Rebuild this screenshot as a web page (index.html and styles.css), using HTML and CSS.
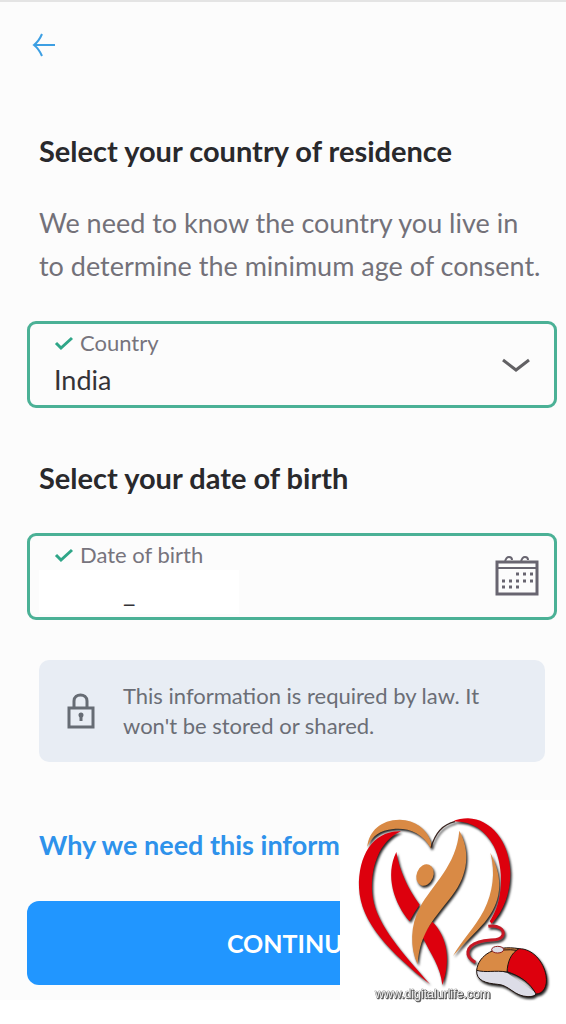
FILE: index.html
```html
<!DOCTYPE html>
<html lang="en">
<head>
    <meta charset="UTF-8">
    <meta name="viewport" content="width=device-width, initial-scale=1.0">
    <title>Country and date of birth</title>
    <link rel="stylesheet" href="styles.css">
</head>
<body>
    <div class="page">
        <button type="button" class="back" aria-label="Back">
            <svg width="24" height="28" viewBox="0 0 24 28" fill="none" stroke="#3d9fe3" stroke-width="2">
                <path d="M23 15H2M10 4Q7 11 2 15Q7 19 10 26"/>
            </svg>
        </button>

        <form id="consentForm">
            <h2>Select your country of residence</h2>
            <p class="intro">We need to know the country you live in to determine the minimum age of consent.</p>

            <div class="field">
                <div class="field-main">
                    <label for="country">
                        <svg class="check" width="20" height="16" viewBox="0 0 20 16"><path d="M2 8L7 13L18 3"/></svg>
                        Country
                    </label>
                    <select id="country" name="country">
                        <option>India</option>
                    </select>
                </div>
                <svg class="chevron" width="30" height="16" viewBox="0 0 30 16" fill="none" stroke="#626164" stroke-width="3">
                    <path d="M2 3L15 13L28 3"/>
                </svg>
            </div>

            <h2>Select your date of birth</h2>

            <div class="field">
                <div class="field-main">
                    <label for="birth">
                        <svg class="check" width="20" height="16" viewBox="0 0 20 16"><path d="M2 8L7 13L18 3"/></svg>
                        Date of birth
                    </label>
                    <input type="text" id="birth" name="birth" class="birth" value="_">
                </div>
                <svg class="calendar" width="44" height="42" viewBox="0 0 44 42" fill="none" stroke="#686570">
                    <path stroke-width="3" d="M2 6H42V38H2Z"/>
                    <path stroke-width="2" d="M2 12H42M10 6Q11 1 14 1Q17 1 17 4M26 6Q27 1 30 1Q33 1 33 4"/>
                    <path stroke-width="3" stroke-dasharray="3 4" d="M21 18H38M7 25H38M7 31H24"/>
                </svg>
            </div>

            <div class="notice">
                <svg class="lock" width="28" height="36" viewBox="0 0 28 36" fill="none" stroke="#666c74" stroke-width="3">
                    <path d="M2 15H26V34H2ZM7 15V8C7 0 20 0 20 8V15M14 21V28"/>
                    <circle cx="14" cy="22" r="1"/>
                </svg>
                <p>This information is required by law. It won't be stored or shared.</p>
            </div>

            <a href="#" class="why">Why we need this information</a>

            <button type="submit" class="continue">CONTINUE</button>
        </form>

        <!-- site logo, sits over the bottom corner -->
        <svg class="logo" viewBox="0 15 678 672" role="img" aria-label="digitalurlife">
            <rect y="15" width="678" height="672" fill="#fff"/>
            <g class="logo-shapes">
                <path fill="#d98a45" d="M82 155C86 108 125 73 180 74C225 76 260 100 273 141L273 161C246 112 205 98 160 102C120 106 97 122 82 155Z"/>
                <path fill="#dd000d" d="M336 80C352 73 368 70 384 70C453 72 508 140 511 231C512 294 490 350 455 386L449 379C490 320 494 220 461 153C432 99 386 75 336 80Z"/>
                <path fill="none" stroke="#3a2622" stroke-width="4" d="M273 158C286 112 308 88 345 80"/>
                <path fill="#dd000d" d="M183 109C101 105 54 181 57 278C62 382 145 466 270 568C191 478 111 392 98 307C87 219 119 136 183 109Z"/>
                <path fill="#dd000d" d="M169 171C178 225 201 277 239 329C228 345 218 361 209 379C163 326 134 242 169 171Z"/>
                <path fill="#dd000d" d="M277 380C324 427 332 500 307 570C301 513 273 480 248 427C256 411 265 395 277 380Z"/>
                <path fill="#d98a45" d="M358 107C391 167 386 238 336 302C287 367 239 409 233 508C209 459 211 389 239 338C276 270 350 211 358 107Z"/>
                <ellipse cx="255" cy="240" rx="25" ry="33" transform="rotate(22 255 240)" fill="#d98a45"/>
                <path fill="#d98a45" d="M451 173C494 255 483 322 435 381C405 415 369 448 339 483C365 437 405 398 432 346C459 292 467 231 451 173Z"/>
                <path fill="none" stroke="#c71724" stroke-width="9" d="M445 394C475 389 493 404 489 419C482 440 452 431 417 441C375 454 374 485 406 502"/>
                <path fill="#dddde7" d="M409 525C408 557 438 565 473 568C508 570 522 604 564 605C577 605 586 601 590 595L501 533L438 518Z"/>
                <path fill="#dd000d" d="M537 461C579 461 611 501 618 541C624 575 609 597 588 597C570 563 538 541 502 529C503 500 511 473 537 461Z"/>
                <path fill="#d98a45" d="M410 526C415 480 466 449 537 461C512 475 503 500 501 531C466 525 437 534 410 526Z"/>
                <path fill="none" stroke="#21140f" stroke-width="3" d="M410 526C415 480 466 449 537 461C579 461 611 501 618 541C624 575 609 597 588 597C570 563 538 541 501 531C466 525 437 534 410 526C408 557 438 565 473 568C508 570 522 604 564 605C577 605 584 603 588 597M501 531C503 500 512 475 537 461M488 465Q515 463 530 466"/>
                <ellipse cx="473" cy="464" rx="18" ry="10" fill="#dddde7" stroke="#8d1d1d" stroke-width="3"/>
            </g>
            <text class="logo-text" x="105" y="610">www.digitalurlife.com</text>
        </svg>
    </div>
</body>
</html>
```
FILE: styles.css
```css
* {
    box-sizing: border-box;
}
body {
    margin: 0;
    background-color: #fff;
    font-family: Lato, "Open Sans", sans-serif;
    color: #29292c;
}
.page {
    position: relative;
    min-height: 100vh;
    padding: 28px 9px 39px 27px;
    border-top: 2px solid #e4e4e4;
    background: linear-gradient(to top, #fff 24px, #fcfcfc 24px);
}
.back {
    display: block;
    margin-left: 5px;
    padding: 0;
    border: none;
    background: none;
    cursor: pointer;
}
.back svg {
    display: block;
}
h2 {
    margin: 0 12px;
    font-size: 29px;
    line-height: 36px;
}
#consentForm {
    padding-top: 75px;
}
.intro {
    margin: 32px 12px 34px;
    font-size: 27px;
    line-height: 43px;
    color: #737179;
}
.field {
    display: flex;
    align-items: center;
    height: 87px;
    padding: 0 15px 0 9px;
    border: 3px solid #4bb196;
    border-radius: 9px;
}
.field-main {
    flex: 1;
}
.field label {
    display: flex;
    align-items: center;
    gap: 6px;
    padding-left: 15px;
    font-size: 22px;
    line-height: 30px;
    color: #77747d;
}
.check {
    fill: none;
    stroke: #2fa688;
    stroke-width: 3;
}
.field select,
.field input {
    display: block;
    appearance: none;
    width: 100%;
    height: 44px;
    padding: 0 15px;
    border: none;
    background: none;
    font-family: inherit;
    font-size: 27px;
    color: #343337;
}
.field .birth {
    width: 200px;
    padding-left: 84px;
    background-color: #fff;
}
.chevron {
    margin-right: 8px;
}
.field + h2 {
    margin-top: 52px;
    margin-bottom: 37px;
}
.notice {
    display: flex;
    align-items: center;
    gap: 28px;
    margin: 40px 12px 65px;
    padding: 21px 28px;
    border-radius: 10px;
    background-color: #e8edf4;
}
.lock {
    flex: none;
}
.notice p {
    margin: 0;
    font-size: 22px;
    line-height: 30px;
    color: #6b6e76;
}
.why {
    display: block;
    margin: 0 12px 38px;
    font-size: 27px;
    font-weight: bold;
    line-height: 36px;
    color: #2e92eb;
    text-decoration: none;
}
.continue {
    display: block;
    width: 100%;
    height: 84px;
    border: none;
    border-radius: 12px;
    background-color: #2196ff;
    color: #fff;
    font-family: inherit;
    font-size: 25px;
    font-weight: bold;
    cursor: pointer;
}
.logo {
    position: absolute;
    right: 0;
    bottom: 0;
    width: 226px;
}
.logo-shapes {
    filter: drop-shadow(4px 6px 3px #222);
}
.logo-text {
    font-family: "Liberation Sans", Arial, sans-serif;
    font-size: 37px;
    fill: #eee;
    stroke: #777;
    stroke-width: 2px;
    paint-order: stroke;
    filter: drop-shadow(3px 3px 1px #555);
}
```
